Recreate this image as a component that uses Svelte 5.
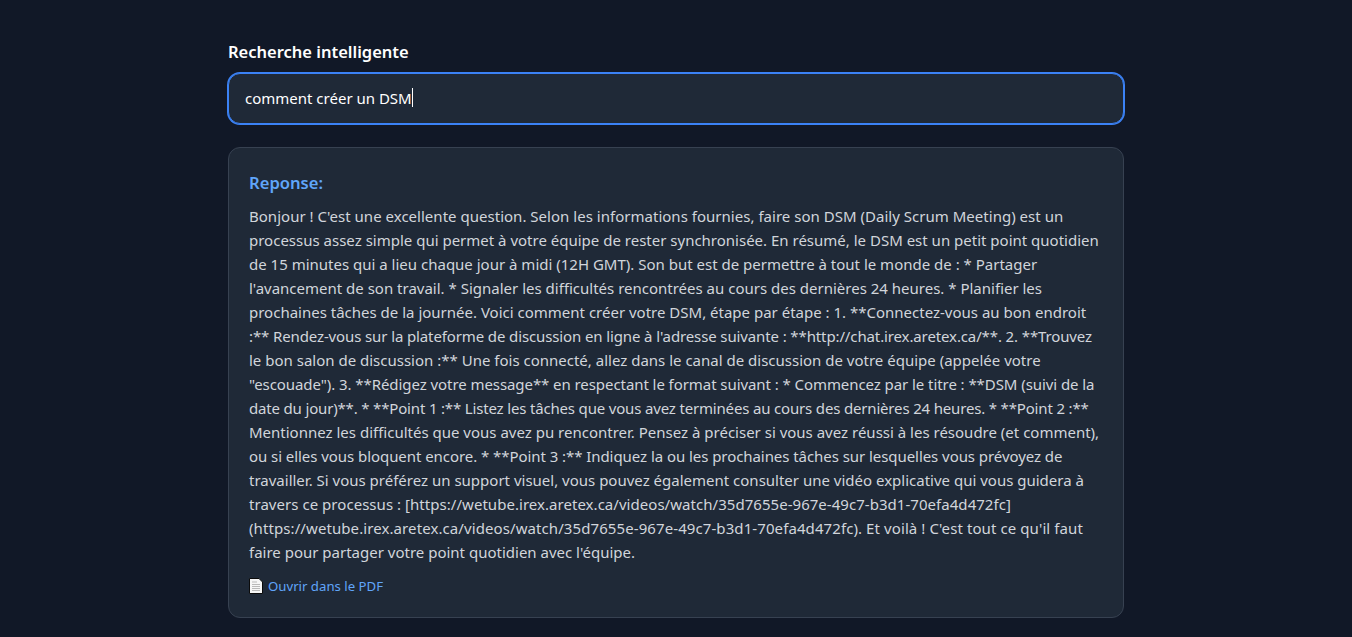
<script>
	let query = 'comment créer un DSM';
	const lines = [
		{ text: `Bonjour ! C'est une excellente question. Selon les informations fournies, faire son DSM (Daily Scrum Meeting) est un`, spacing: 0.02 },
		{ text: `processus assez simple qui permet à votre équipe de rester synchronisée. En résumé, le DSM est un petit point quotidien` },
		{ text: `de 15 minutes qui a lieu chaque jour à midi (12H GMT). Son but est de permettre à tout le monde de : * Partager` },
		{ text: `l'avancement de son travail. * Signaler les difficultés rencontrées au cours des dernières 24 heures. * Planifier les` },
		{ text: `prochaines tâches de la journée. Voici comment créer votre DSM, étape par étape : 1. **Connectez-vous au bon endroit` },
		{ text: `:** Rendez-vous sur la plateforme de discussion en ligne à l'adresse suivante : **http://chat.irex.aretex.ca/**. 2. **Trouvez`, spacing: -0.12 },
		{ text: `le bon salon de discussion :** Une fois connecté, allez dans le canal de discussion de votre équipe (appelée votre` },
		{ text: `"escouade"). 3. **Rédigez votre message** en respectant le format suivant : * Commencez par le titre : **DSM (suivi de la`, spacing: -0.07 },
		{ text: `date du jour)**. * **Point 1 :** Listez les tâches que vous avez terminées au cours des dernières 24 heures. * **Point 2 :**`, spacing: -0.17 },
		{ text: `Mentionnez les difficultés que vous avez pu rencontrer. Pensez à préciser si vous avez réussi à les résoudre (et comment),` },
		{ text: `ou si elles vous bloquent encore. * **Point 3 :** Indiquez la ou les prochaines tâches sur lesquelles vous prévoyez de`, spacing: -0.06 },
		{ text: `travailler. Si vous préférez un support visuel, vous pouvez également consulter une vidéo explicative qui vous guidera à` },
		{ text: `travers ce processus : [https://wetube.irex.aretex.ca/videos/watch/35d7655e-967e-49c7-b3d1-70efa4d472fc]`, spacing: 0.04 },
		{ text: `(https://wetube.irex.aretex.ca/videos/watch/35d7655e-967e-49c7-b3d1-70efa4d472fc). Et voilà ! C'est tout ce qu'il faut`, spacing: 0.09 },
		{ text: `faire pour partager votre point quotidien avec l'équipe.` }
	];
</script>

<main class="page">
	<section class="search">
		<h2 class="label">Recherche intelligente</h2>
		<div class="input" role="textbox" tabindex="0">{query}<span class="caret"></span></div>

		<div class="card">
			<h3 class="title">Reponse:</h3>
			<p class="answer">
				{#each lines as line}
					<span class="line" style="letter-spacing: {line.spacing ?? 0}px">{line.text}</span>
				{/each}
			</p>
			<a class="pdf" href="#pdf">
				<svg class="doc" width="14" height="16" viewBox="0 0 14 16">
					<path d="M.5.500h9.500l3.500 3.500v11.500H.5z" fill="#f6f6f6" stroke="#0b0b0b" />
					<path d="M3 4h5M3 6.500h8M3 8.500h8M3 10.500h8M3 12.500h8" stroke="#b9b9b9" />
				</svg>
				Ouvrir dans le PDF
			</a>
		</div>
	</section>
</main>

<style>
	:global(body) {
		background: #111827;
		font-family: 'Noto Sans', 'Open Sans', sans-serif;
	}

	.page {
		min-height: 637px;
		display: flex;
		justify-content: center;
	}

	.search {
		width: 896px;
		padding-top: 40px;
	}

	.label {
		margin: 0;
		font-size: 16.5px;
		line-height: 24px;
		font-weight: 600;
		color: #fff;
	}

	.input {
		box-sizing: border-box;
		height: 51px;
		margin-top: 9px;
		padding: 0 16px 2px;
		display: flex;
		align-items: center;
		background: #1f2937;
		border: 1px solid #3b82f6;
		box-shadow: 0 0 0 1px #3b82f6;
		border-radius: 12px;
		color: #fff;
		font-size: 15px;
	}

	.caret {
		width: 1px;
		height: 19px;
		background: #fff;
	}

	.card {
		box-sizing: border-box;
		margin-top: 23px;
		padding: 20px;
		height: 471px;
		background: #1f2937;
		border: 1px solid #374151;
		border-radius: 12px;
	}

	.title {
		margin: 0 0 7px;
		font-size: 16.6px;
		line-height: 29px;
		font-weight: 600;
		color: #60a5fa;
	}

	.answer {
		margin: 0;
		font-size: 15px;
		line-height: 24px;
		color: #d1d5db;
	}

	.line {
		display: block;
		white-space: nowrap;
	}

	.pdf {
		margin-top: 12px;
		display: flex;
		align-items: center;
		gap: 5px;
		font-size: 13.2px;
		line-height: 20px;
		color: #60a5fa;
		text-decoration: none;
	}
</style>
